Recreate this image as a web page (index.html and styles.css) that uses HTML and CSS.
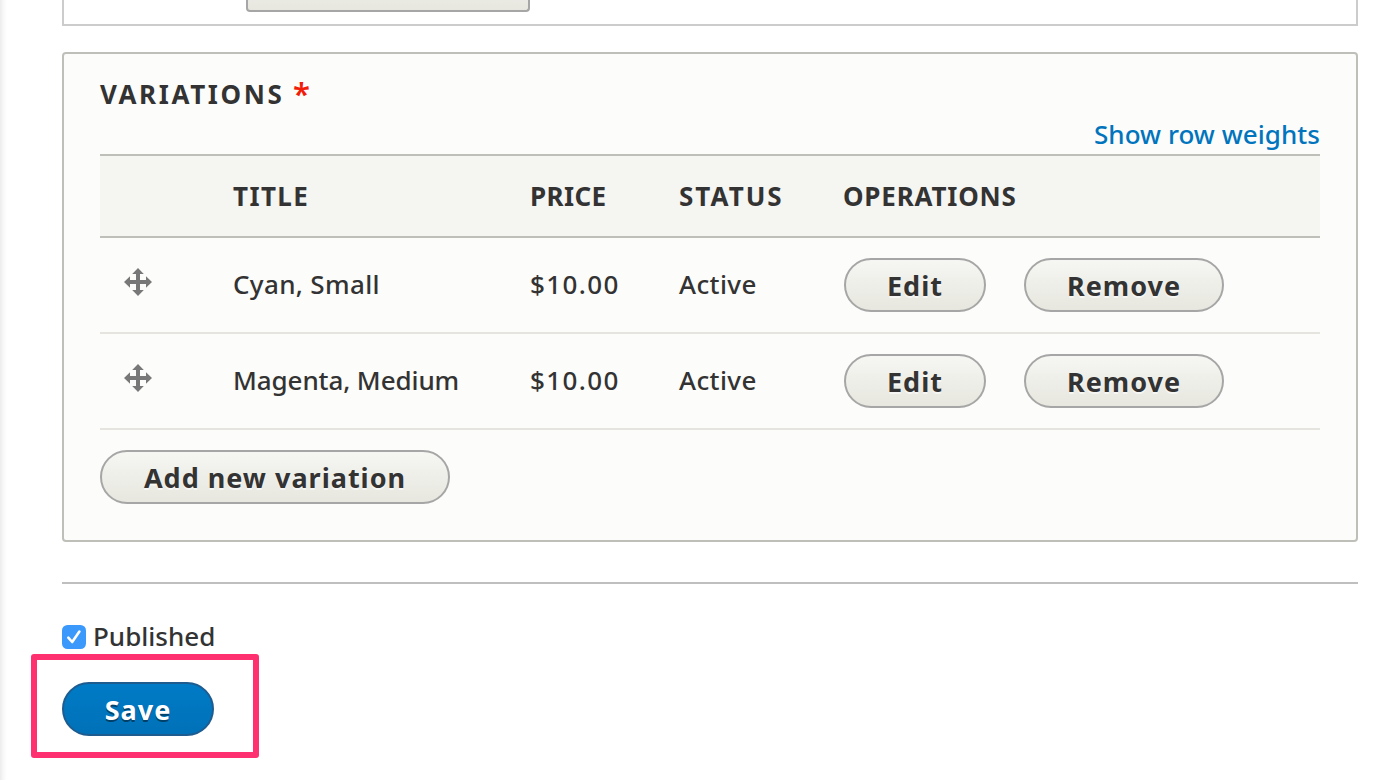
FILE: index.html
```html
<!DOCTYPE html>
<html lang="en">
<head>
<meta charset="utf-8">
<title>Edit product</title>
<link rel="stylesheet" href="styles.css">
</head>
<body>
<main class="page">
  <section class="previous">
    <div class="previous-button"></div>
  </section>
  <section class="panel">
    <h2 class="legend"><span class="legend-text">Variations</span><span class="required">*</span></h2>
    <div class="weights"><a class="weights-link">Show row weights</a></div>
    <div class="table">
      <div class="row head">
        <span></span><span class="th th-title">Title</span><span class="th th-price">Price</span><span class="th th-status">Status</span><span class="th th-ops">Operations</span>
      </div>
      <div class="row">
        <svg class="drag" viewBox="0 0 14 14"><path d="M7 0 9.9 3H8v3h3V4.1L14 7l-3 2.9V8H8v3h1.9L7 14 4.1 11H6V8H3v1.9L0 7l3-2.9V6h3V3H4.1z"/></svg>
        <span class="cell name-small">Cyan, Small</span><span class="cell price">$10.00</span><span class="cell status">Active</span>
        <div class="ops"><button class="btn edit">Edit</button><button class="btn remove">Remove</button></div>
      </div>
      <div class="row">
        <svg class="drag" viewBox="0 0 14 14"><path d="M7 0 9.9 3H8v3h3V4.1L14 7l-3 2.9V8H8v3h1.9L7 14 4.1 11H6V8H3v1.9L0 7l3-2.9V6h3V3H4.1z"/></svg>
        <span class="cell name-medium">Magenta, Medium</span><span class="cell price">$10.00</span><span class="cell status">Active</span>
        <div class="ops"><button class="btn edit">Edit</button><button class="btn remove">Remove</button></div>
      </div>
    </div>
    <button class="btn add">Add new variation</button>
  </section>
  <footer class="actions">
    <label class="published">
      <svg class="check" viewBox="0 0 24 24"><rect width="24" height="24" rx="5.5" fill="#3b99fc"/><path d="M6.3 12.7 10.2 17 17.4 6.5" fill="none" stroke="#fff" stroke-width="2.6" stroke-linecap="round" stroke-linejoin="round"/></svg>
      <span class="published-text">Published</span>
    </label>
    <div class="save-wrap">
      <button class="btn save">Save</button>
      <div class="highlight"></div>
    </div>
  </footer>
</main>
</body>
</html>
```
FILE: styles.css
```css
* { box-sizing: border-box; }
body {
  margin: 0;
  background: #fff;
  color: #333;
  font: 500 26px/36px "Noto Sans", "Open Sans", sans-serif;
}
.page {
  height: 780px;
  padding: 0 28px 0 62px;
  overflow: hidden;
  background: linear-gradient(90deg, #ececec 0, #f7f7f7 3px, #fff 7px);
}
.previous {
  height: 26px;
  padding-left: 182px;
  border: 2px solid #ccc;
  border-top: 0;
  background: #fff;
}
.previous-button {
  width: 284px;
  height: 12px;
  border: 2px solid #a6a6a6;
  border-top: 0;
  border-radius: 0 0 4px 4px;
  background: linear-gradient(#eaeae4, #e7e7df);
}
.panel {
  height: 490px;
  margin-top: 26px;
  padding: 22px 36px 0;
  border: 2px solid #bfbfba;
  border-radius: 4px;
  background: #fcfcfa;
}
.legend {
  display: flex;
  height: 40px;
  margin: 0;
  font-size: 26px;
  font-weight: 700;
  line-height: 36px;
  text-transform: uppercase;
}
.legend-text { width: 193px; letter-spacing: 2.6px; white-space: nowrap; }
.required { color: #f21c0a; font-size: 31px; font-weight: 600; line-height: 34px; }
.weights {
  display: flex;
  justify-content: flex-end;
  height: 38px;
}
.weights-link { color: #0074bd; letter-spacing: .05px; }
.table { border-top: 2px solid #bfbfba; }
.row {
  display: grid;
  grid-template-columns: 133px 297px 149px 164px 1fr;
  align-items: center;
  height: 96px;
  border-bottom: 2px solid #e6e4df;
}
.head {
  height: 82px;
  border-color: #bfbfba;
  background: #f5f5f2;
}
.th { font-weight: 700; text-transform: uppercase; }
.th-title { letter-spacing: 1.4px; }
.th-price { letter-spacing: .4px; }
.th-status { letter-spacing: 2px; }
.th-ops { letter-spacing: .8px; }
.cell { padding-bottom: 2px; }
.name-small { letter-spacing: .35px; }
.name-medium { letter-spacing: -.1px; }
.price { letter-spacing: 1.4px; }
.status { letter-spacing: .4px; }
.drag { width: 28px; height: 28px; margin: 0 0 6px 24px; fill: #787878; }
.ops { display: flex; gap: 38px; padding-left: 1px; }
.btn {
  height: 54px;
  padding: 1px 0 0;
  border: 2px solid #a6a6a6;
  border-radius: 27px;
  background: linear-gradient(#f6f6f3, #e7e7df);
  color: #333;
  font: 700 27px/48px "Noto Sans", "Open Sans", sans-serif;
  letter-spacing: 1px;
  text-align: center;
  text-shadow: 0 2px 0 rgba(255, 255, 255, .6);
  white-space: nowrap;
}
.edit { width: 142px; }
.remove { width: 200px; }
.add { display: block; width: 350px; margin-top: 20px; }
.actions {
  margin-top: 40px;
  padding-top: 35px;
  border-top: 2px solid #bfbfbf;
}
.published { display: flex; align-items: center; gap: 7px; height: 36px; }
.published-text { padding-bottom: 2px; }
.check { width: 24px; height: 24px; }
.save-wrap { position: relative; width: 152px; margin-top: 27px; }
.save {
  width: 152px;
  border-color: #1e5c90;
  background: linear-gradient(#007bc6, #0071b8);
  color: #fff;
  text-shadow: 0 2px 0 rgba(0, 0, 0, .45);
}
.highlight {
  position: absolute;
  top: -28px;
  left: -31px;
  width: 228px;
  height: 104px;
  border: 6px solid #ff3070;
  border-radius: 3px;
}
```
